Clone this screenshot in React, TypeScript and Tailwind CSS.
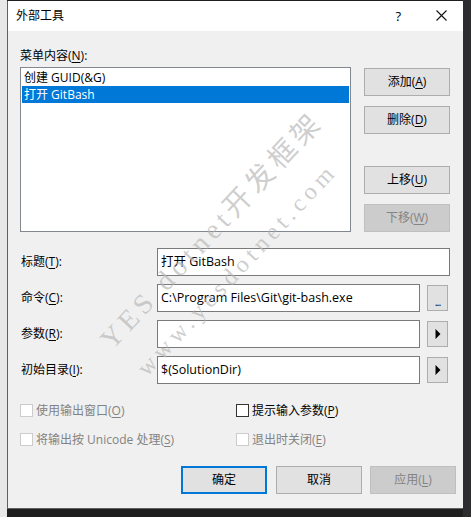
import type { ReactNode } from "react";

const U = ({ children }: { children: ReactNode }) => (
  <span className="underline underline-offset-2 decoration-1">{children}</span>
);

function Btn({
  children,
  disabled,
  primary,
  className = "",
}: {
  children: ReactNode;
  disabled?: boolean;
  primary?: boolean;
  className?: string;
}) {
  const look = disabled
    ? "bg-[#cccccc] border border-[#bfbfbf] text-[#838383]"
    : primary
    ? "bg-[#e1e1e1] border-2 border-[#0078d7] text-black"
    : "bg-[#e1e1e1] border border-[#adadad] text-black";
  return (
    <div className={`w-[86px] h-[28px] flex items-center justify-center ${look} ${className}`}>
      {children}
    </div>
  );
}

function Field({ label, value, side }: { label: ReactNode; value: string; side?: "dots" | "arrow" }) {
  return (
    <div className="flex items-center h-[28px]">
      <div className="w-[137px] pl-[1px]">{label}</div>
      <div
        className={`h-[28px] border border-[#7a7a7a] bg-white flex items-center pl-[3px] text-[12.5px] ${
          side ? "w-[263px]" : "w-[293px]"
        }`}
      >
        {value}
      </div>
      {side && (
        <div className="ml-[7px] w-[21px] h-[26px] bg-[#e1e1e1] border border-[#adadad] flex items-center justify-center">
          {side === "dots" ? (
            <span className="text-[11px] leading-none mt-[6px] tracking-[-1px]">...</span>
          ) : (
            <svg width="6" height="10" viewBox="0 0 6 10">
              <path d="M0.5 0 L5.5 5 L0.5 10 Z" fill="#000" />
              <path d="M0 0 L1 1 L1 9 L0 10 Z" fill="#b5651d" />
            </svg>
          )}
        </div>
      )}
    </div>
  );
}

function Check({ children, disabled }: { children: ReactNode; disabled?: boolean }) {
  return (
    <div className={`flex items-center h-[13px] ${disabled ? "text-[#838383]" : "text-black"}`}>
      <div
        className={`w-[13px] h-[13px] bg-white border ${
          disabled ? "border-[#cccccc]" : "border-[#333333]"
        }`}
      />
      <span className="ml-[3px] whitespace-nowrap">{children}</span>
    </div>
  );
}

export default function App() {
  return (
    <div className="relative w-[471px] h-[517px] overflow-hidden bg-[#1f1f1f] flex items-start text-[12px] leading-[16px] font-['Open_Sans','Noto_Sans_CJK_SC',sans-serif]">
      <div className="w-[7px] h-full bg-[#e8e8e8] shrink-0" />

      <div className="w-[456px] h-[508px] mt-[1px] border-l border-b border-[#606060] bg-[#f0f0f0] flex flex-col shrink-0">
        <div className="h-[30px] bg-white flex items-center pl-[8px] pb-[1px] text-black">
          <span>外部工具</span>
          <span className="ml-auto text-[13px]">?</span>
          <svg className="ml-[35px] mr-[16px]" width="11" height="11" viewBox="0 0 11 11">
            <path d="M0.5 0.5 L10.5 10.5 M10.5 0.5 L0.5 10.5" stroke="#111" strokeWidth="1.1" />
          </svg>
        </div>

        <div className="flex-1 pl-[12px] pt-[17px] text-black">
          <div className="h-[16px]">
            菜单内容(<U>N</U>):
          </div>
          <div className="flex mt-[3px]">
            <div className="w-[331px] h-[165px] border border-[#828790] bg-white pt-[1px] px-[1px]">
              <div className="h-[17px] pl-[2px] flex items-center">创建 GUID(&amp;G)</div>
              <div className="h-[17px] pl-[2px] flex items-center bg-[#0078d7] text-white">打开 GitBash</div>
            </div>
            <div className="ml-[13px] flex flex-col">
              <Btn className="mt-[1px]">
                添加(<U>A</U>)
              </Btn>
              <Btn className="mt-[10px]">
                删除(<U>D</U>)
              </Btn>
              <Btn className="mt-[32px]">
                上移(<U>U</U>)
              </Btn>
              <Btn className="mt-[10px]" disabled>
                下移(<U>W</U>)
              </Btn>
            </div>
          </div>

          <div className="mt-[16px] flex flex-col gap-[8px]">
            <Field label={<>标题(<U>T</U>):</>} value="打开 GitBash" />
            <Field label={<>命令(<U>C</U>):</>} value="C:\Program Files\Git\git-bash.exe" side="dots" />
            <Field label={<>参数(<U>R</U>):</>} value="" side="arrow" />
            <Field label={<>初始目录(<U>I</U>):</>} value="$(SolutionDir)" side="arrow" />
          </div>

          <div className="mt-[20px] flex">
            <div className="w-[216px]">
              <Check disabled>
                使用输出窗口(<U>O</U>)
              </Check>
            </div>
            <Check>
              提示输入参数(<U>P</U>)
            </Check>
          </div>
          <div className="mt-[16px] flex">
            <div className="w-[216px]">
              <Check disabled>
                将输出按 Unicode 处理(<U>S</U>)
              </Check>
            </div>
            <Check disabled>
              退出时关闭(<U>E</U>)
            </Check>
          </div>

          <div className="mt-[20px] flex ml-[161px]">
            <Btn primary>确定</Btn>
            <Btn className="ml-[9px]">取消</Btn>
            <Btn className="ml-[8px]" disabled>
              应用(<U>L</U>)
            </Btn>
          </div>
        </div>
      </div>

      <div className="w-[8px] h-full bg-[#2d2d30] shrink-0" />

      <span className="absolute left-[116px] top-[326px] origin-bottom-left -rotate-[47deg] whitespace-nowrap pointer-events-none text-[28px] leading-[28px] tracking-[5px] text-[#b8b8b8]/70 font-['Liberation_Serif','Noto_Sans_CJK_SC',serif]">
        YES dotnet开发框架
      </span>
      <span className="absolute left-[150px] top-[356px] origin-bottom-left -rotate-[47deg] whitespace-nowrap pointer-events-none text-[24px] leading-[24px] tracking-[5px] text-[#b8b8b8]/70 font-['Liberation_Serif',serif]">
        www.yesdotnet.com
      </span>
    </div>
  );
}
